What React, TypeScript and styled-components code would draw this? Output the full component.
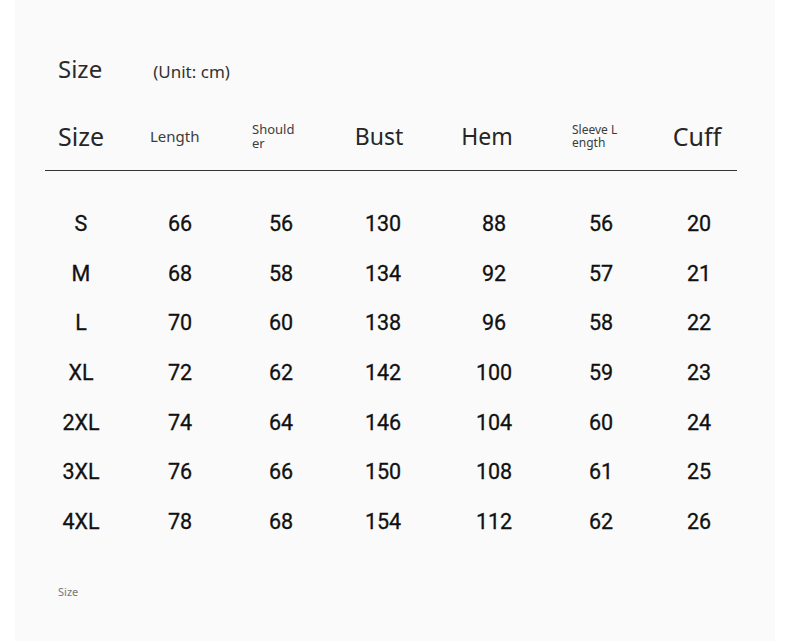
import React from "react";
import styled, { createGlobalStyle } from "styled-components";

const Global = createGlobalStyle`
  html, body { margin: 0; padding: 0; background: #ffffff; }
  body { font-family: "Noto Sans", "Liberation Sans", sans-serif; }
`;

const COLS = "72px 126px 76px 128px 94px 120px 76px";

const Panel = styled.div`
  box-sizing: border-box;
  width: 760px;
  height: 641px;
  margin: 0 15px;
  background: #fafafa;
  padding: 57px 38px 0 30px;
  display: flex;
  flex-direction: column;
`;

const TitleRow = styled.div`
  display: flex;
  align-items: baseline;
  padding-left: 13px;
  color: #2a2a2a;
`;

const Title = styled.span`
  font-size: 24px;
  line-height: 24px;
`;

const Unit = styled.span`
  font-size: 17px;
  line-height: 17px;
  margin-left: 51px;
  color: #333;
`;

const HeadRow = styled.div`
  display: grid;
  grid-template-columns: ${COLS};
  align-items: center;
  height: 64px;
  box-sizing: border-box;
  padding-bottom: 5px;
  margin-top: 26px;
  border-bottom: 1.3px solid #333;
`;

const HeadCell = styled.div<{ $size: number; $align?: "left" | "center"; $padL?: number; $padR?: number; $lh?: number }>`
  font-size: ${(p) => p.$size}px;
  line-height: ${(p) => p.$lh ?? p.$size}px;
  text-align: ${(p) => p.$align ?? "center"};
  padding-left: ${(p) => p.$padL ?? 0}px;
  padding-right: ${(p) => p.$padR ?? 0}px;
  color: ${(p) => (p.$size < 16 ? "#3c3c3c" : "#262626")};
  white-space: nowrap;
`;

const Body = styled.div`
  display: grid;
  grid-template-columns: ${COLS};
  grid-auto-rows: 49.7px;
  margin-top: 28px;
`;

const Cell = styled.div`
  font-family: Roboto, "Noto Sans", sans-serif;
  font-size: 21.5px;
  font-weight: 400;
  -webkit-text-stroke: 0.3px #111;
  line-height: 49.7px;
  text-align: center;
  color: #111;
`;

const Footer = styled.div`
  padding-left: 13px;
  margin-top: 39.5px;
  font-size: 11px;
  line-height: 11px;
  color: #777;
`;

const rows: (string | number)[][] = [
  ["S", 66, 56, 130, 88, 56, 20],
  ["M", 68, 58, 134, 92, 57, 21],
  ["L", 70, 60, 138, 96, 58, 22],
  ["XL", 72, 62, 142, 100, 59, 23],
  ["2XL", 74, 64, 146, 104, 60, 24],
  ["3XL", 76, 66, 150, 108, 61, 25],
  ["4XL", 78, 68, 154, 112, 62, 26],
];

export default function App() {
  return (
    <>
      <Global />
      <Panel>
        <TitleRow>
          <Title>Size</Title>
          <Unit>(Unit: cm)</Unit>
        </TitleRow>
        <HeadRow>
          <HeadCell $size={25}>Size</HeadCell>
          <HeadCell $size={15} $align="left" $padL={33}>Length</HeadCell>
          <HeadCell $size={13} $lh={14} $align="left" $padL={9}>
            Should
            <br />
            er
          </HeadCell>
          <HeadCell $size={23} $padR={8}>Bust</HeadCell>
          <HeadCell $size={23} $padR={14}>Hem</HeadCell>
          <HeadCell $size={12} $lh={13} $align="left" $padL={31}>
            Sleeve L
            <br />
            ength
          </HeadCell>
          <HeadCell $size={25} $padR={4}>Cuff</HeadCell>
        </HeadRow>
        <Body>
          {rows.map((r) => r.map((v, i) => <Cell key={`${r[0]}-${i}`}>{v}</Cell>))}
        </Body>
        <Footer>Size</Footer>
      </Panel>
    </>
  );
}
